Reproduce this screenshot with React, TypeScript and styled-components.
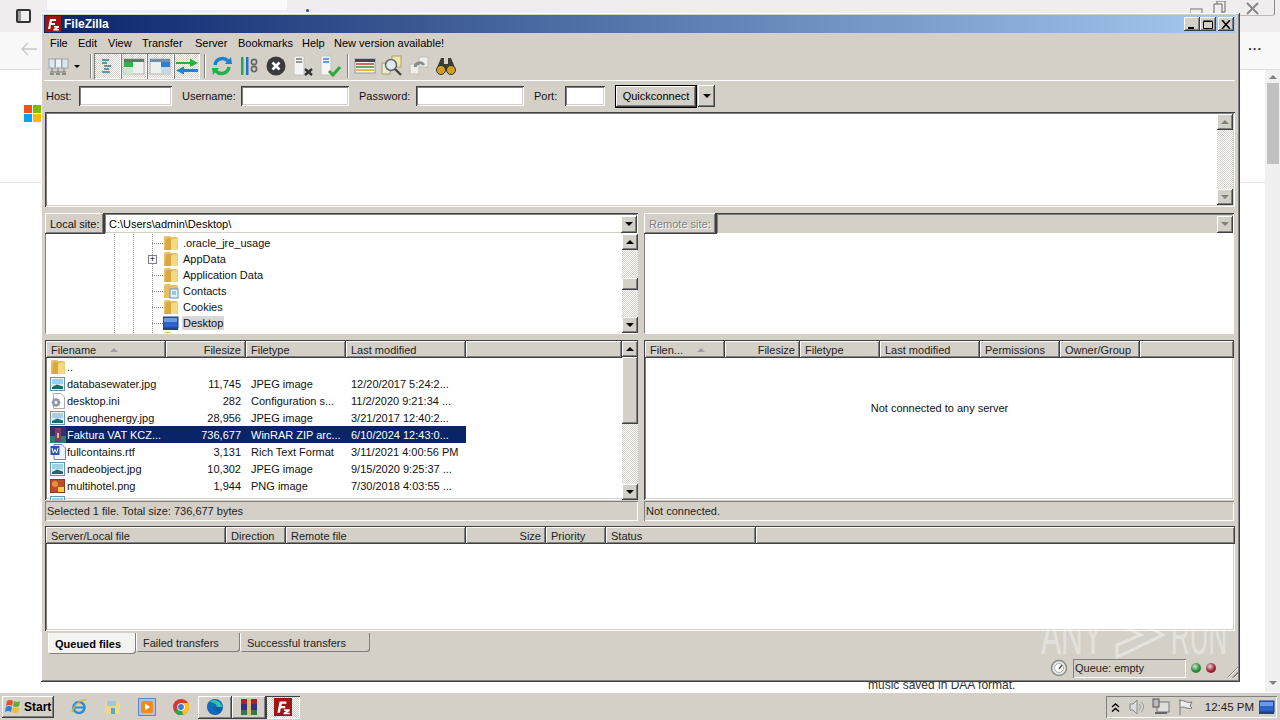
import * as React from "react";
import styled, { createGlobalStyle, css } from "styled-components";

const FACE = "#d4d0c8";
const UI_FONT = `"Liberation Sans", Arial, sans-serif`;

const raised = css`
  box-shadow: inset -1px -1px 0 #404040, inset 1px 1px 0 #fff, inset -2px -2px 0 #808080;
`;
const sunken = css`
  box-shadow: inset 1px 1px 0 #404040, inset -1px -1px 0 #fff, inset 2px 2px 0 #808080, inset -2px -2px 0 ${FACE};
`;
const dither = css`
  background-color: #fff;
  background-image: conic-gradient(${FACE} 25%, #fff 0 50%, ${FACE} 0 75%, #fff 0);
  background-size: 2px 2px;
`;

const Global = createGlobalStyle`
  html, body { margin: 0; padding: 0; background: #fff; overflow: hidden; }
  * { box-sizing: border-box; }
  body { font: 11px ${UI_FONT}; color: #000; }
`;

const Root = styled.div`
  position: relative;
  width: 1280px;
  height: 720px;
  display: flex;
  flex-direction: column;
  overflow: hidden;
`;

/* ---- browser behind the window ---- */
const Browser = styled.div`
  flex: 1;
  display: flex;
  flex-direction: column;
  min-height: 0;
`;
const TabStrip = styled.div`
  height: 32px;
  background: #efeded;
  display: flex;
  align-items: flex-start;
  padding-left: 16px;
`;
const SideIcon = styled.div`
  width: 15px;
  height: 14px;
  margin-top: 9px;
  border: 2px solid #333;
  border-radius: 2px;
  background: linear-gradient(90deg, #999 0 3px, transparent 3px);
`;
const TabWhite = styled.div`
  width: 240px;
  height: 10px;
  margin-left: 16px;
  background: #fafafa;
`;
const TabDot = styled.span`
  width: 3px;
  height: 3px;
  margin: 9px 0 0 19px;
  background: #1f4f8f;
  border-radius: 50%;
`;
const Captions = styled.div`
  margin-left: auto;
  width: 92px;
  height: 16px;
  margin-right: 5px;
  display: flex;
  align-items: center;
  justify-content: flex-end;
  padding-right: 14px;
  border-right: 1px solid #888;
  border-bottom: 1px solid #bbb;
  border-radius: 0 0 3px 0;
`;
const PageLine = styled.div`
  height: 1px;
  background: #e4e4e4;
  margin: 0 0 0 -24px;
`;
const AddressRow = styled.div`
  height: 38px;
  background: #f8f8f8;
  border-bottom: 1px solid #ddd;
  display: flex;
  align-items: center;
  justify-content: space-between;
  padding: 0 18px 4px 20px;
`;
const Dots = styled.span`
  color: #333;
  font-size: 13px;
  font-weight: bold;
  letter-spacing: 1px;
  margin-bottom: 6px;
`;
const PageBody = styled.div`
  flex: 1;
  display: flex;
  min-height: 0;
`;
const PageMain = styled.div`
  flex: 1;
  display: flex;
  flex-direction: column;
  padding: 35px 0 0 24px;
`;
const MsLogo = styled.div`
  width: 17px;
  height: 17px;
  display: grid;
  grid-template-columns: 8px 8px;
  gap: 1px;
  margin-bottom: 60px;
  span:nth-child(1) { background: #f25022; }
  span:nth-child(2) { background: #7fba00; }
  span:nth-child(3) { background: #00a4ef; }
  span:nth-child(4) { background: #ffb900; }
`;
const PageText = styled.div`
  font-size: 12px;
  line-height: 14px;
  color: #333;
  padding-left: 844px;
  margin-top: auto;
`;
const PageScroll = styled.div`
  width: 15px;
  background: #f0f0f0;
  display: flex;
  flex-direction: column;
  align-items: center;
  padding: 5px 0 7px;
`;
const PageThumb = styled.div`
  width: 12px;
  height: 81px;
  background: #c0c0c0;
  margin-top: 4px;
  margin-bottom: auto;
`;

/* ---- FileZilla window ---- */
const Win = styled.div`
  position: absolute;
  left: 41px;
  top: 13px;
  width: 1199px;
  height: 669px;
  background: ${FACE};
  padding: 2px 5px 2px 3px;
  display: flex;
  flex-direction: column;
  ${raised}
`;
const TitleBar = styled.div`
  height: 18px;
  flex: none;
  background: linear-gradient(90deg, #0a246a, #a6caf0);
  display: flex;
  align-items: center;
  color: #fff;
  font-weight: bold;
  font-size: 12px;
  padding-left: 1px;
  gap: 3px;
`;
const WinButtons = styled.div`
  margin-left: auto;
  display: flex;
  padding-right: 1px;
`;
const WinBtn = styled.div<{ $gap?: boolean }>`
  width: 16px;
  height: 14px;
  margin-left: ${(p) => (p.$gap ? "2px" : "0")};
  background: ${FACE};
  display: flex;
  align-items: center;
  justify-content: center;
  ${raised}
`;
const MenuBar = styled.div`
  height: 19px;
  flex: none;
  display: flex;
  align-items: center;
  padding-left: 6px;
`;
const MenuItem = styled.span<{ $w: number }>`
  width: ${(p) => p.$w}px;
`;
const ToolBar = styled.div`
  height: 29px;
  flex: none;
  display: flex;
  align-items: center;
  padding-left: 2px;
  border-bottom: 1px solid #fff;
`;
const ToolBtn = styled.div<{ $w?: number; $on?: boolean }>`
  width: ${(p) => p.$w ?? 27}px;
  height: 26px;
  display: flex;
  align-items: center;
  justify-content: center;
  flex: none;
  ${(p) =>
    p.$on &&
    css`
      ${dither}
      box-shadow: inset 1px 1px 0 #808080, inset -1px -1px 0 #fff;
    `}
`;
const ToolSep = styled.div`
  width: 2px;
  height: 24px;
  margin: 0 2px 0 4px;
  flex: none;
  border-left: 1px solid #808080;
  border-right: 1px solid #fff;
`;
const DropCaret = styled.span`
  width: 0;
  height: 0;
  border: 3px solid transparent;
  border-top: 3px solid #000;
  border-bottom: 0;
  margin: 0 6px 0 5px;
`;
const QuickRow = styled.div`
  height: 28px;
  flex: none;
  display: flex;
  align-items: center;
  padding: 2px 0 0 2px;
`;
const QLabel = styled.span<{ $w: number }>`
  width: ${(p) => p.$w}px;
  flex: none;
  color: #111;
`;
const QInput = styled.div<{ $w: number; $mr?: number }>`
  width: ${(p) => p.$w}px;
  height: 20px;
  margin-right: ${(p) => p.$mr ?? 10}px;
  background: #fff;
  flex: none;
  ${sunken}
`;
const QuickBtn = styled.div`
  width: 82px;
  height: 23px;
  background: ${FACE};
  border: 1px solid #000;
  display: flex;
  align-items: center;
  justify-content: center;
  ${raised}
`;
const QuickDrop = styled.div`
  width: 17px;
  height: 22px;
  margin-left: 1px;
  background: ${FACE};
  display: flex;
  align-items: center;
  justify-content: center;
  ${raised}
`;
const LogBox = styled.div`
  height: 95px;
  flex: none;
  margin: 3px 0 6px 1px;
  background: #fff;
  display: flex;
  justify-content: flex-end;
  padding: 2px 2px 2px 0;
  ${sunken}
`;

/* scrollbars */
const ScrollTrack = styled.div`
  width: 16px;
  flex: none;
  display: flex;
  flex-direction: column;
  justify-content: space-between;
  ${dither}
`;
const ScrollBtn = styled.div`
  width: 16px;
  height: 16px;
  background: ${FACE};
  display: flex;
  align-items: center;
  justify-content: center;
  flex: none;
  ${raised}
`;
const Thumb = styled.div<{ $h: number }>`
  width: 16px;
  height: ${(p) => p.$h}px;
  background: ${FACE};
  flex: none;
  ${raised}
`;
const Arrow = styled.span<{ $dir: "up" | "down"; $dim?: boolean }>`
  width: 0;
  height: 0;
  border: 4px solid transparent;
  ${(p) =>
    p.$dir === "up"
      ? css`
          border-top: 0;
          border-bottom: 4px solid ${p.$dim ? "#808080" : "#000"};
        `
      : css`
          border-bottom: 0;
          border-top: 4px solid ${p.$dim ? "#808080" : "#000"};
        `}
`;

/* panes */
const Panes = styled.div`
  display: grid;
  grid-template-columns: 593px 590px;
  column-gap: 6px;
  margin-left: 1px;
  flex: none;
`;
const Pane = styled.div`
  display: flex;
  flex-direction: column;
  min-width: 0;
`;
const SiteRow = styled.div`
  height: 21px;
  display: flex;
  box-shadow: inset 0 1px 0 #404040, inset 1px 0 0 #808080;
`;
const SiteLabel = styled.div<{ $w: number; $dim?: boolean }>`
  width: ${(p) => p.$w}px;
  flex: none;
  display: flex;
  align-items: center;
  padding-left: 5px;
  background: ${FACE};
  color: ${(p) => (p.$dim ? "#808080" : "#111")};
  text-shadow: ${(p) => (p.$dim ? "1px 1px 0 #fff" : "none")};
  ${raised}
`;
const SiteCombo = styled.div<{ $dim?: boolean }>`
  flex: 1;
  background: ${(p) => (p.$dim ? FACE : "#fff")};
  display: flex;
  align-items: center;
  justify-content: space-between;
  padding: 2px 1px 1px 5px;
  ${sunken}
`;
const ComboBtn = styled(ScrollBtn)`
  height: 17px;
`;
const TreeBox = styled.div`
  height: 100px;
  margin-bottom: 6px;
  background: #fff;
  display: flex;
  border-left: 1px solid #808080;
  border-bottom: 1px solid #fff;
  overflow: hidden;
`;
const TreeList = styled.div`
  flex: 1;
  padding: 1px 0 0 117px;
  background-image:
    repeating-linear-gradient(#999 0 1px, transparent 1px 2px),
    repeating-linear-gradient(#999 0 1px, transparent 1px 2px),
    repeating-linear-gradient(#999 0 1px, transparent 1px 2px);
  background-size: 1px 100%;
  background-position: 68px 0, 87px 0, 106px 0;
  background-repeat: no-repeat;
`;
const TreeRow = styled.div`
  height: 16px;
  display: flex;
  align-items: center;
  flex: none;
`;
const TreeSvg = styled.span`
  display: flex;
  width: 20px;
  flex: none;
`;
const TreeLabel = styled.span<{ $sel?: boolean }>`
  padding: 0 1px;
  margin-left: -1px;
  background: ${(p) => (p.$sel ? "#d8d8d8" : "transparent")};
  line-height: 14px;
  color: #111;
`;
const TreeStub = styled.span`
  width: 11px;
  margin-left: -11px;
  border-top: 1px dotted #888;
  flex: none;
`;
const Plus = styled.span`
  width: 9px;
  height: 9px;
  margin-left: -15px;
  margin-right: 6px;
  border: 1px solid #808080;
  background: #fff;
  display: flex;
  align-items: center;
  justify-content: center;
  font-size: 9px;
  line-height: 7px;
  flex: none;
`;
const ListBox = styled.div`
  height: 160px;
  display: flex;
  flex-direction: column;
  background: #fff;
  ${sunken}
  padding: 1px 0 0 1px;
  overflow: hidden;
`;
const HeadRow = styled.div`
  height: 17px;
  flex: none;
  display: flex;
  background: ${FACE};
`;
const HeadCell = styled.div<{ $w: number; $right?: boolean }>`
  width: ${(p) => p.$w}px;
  flex: none;
  display: flex;
  align-items: center;
  justify-content: ${(p) => (p.$right ? "flex-end" : "flex-start")};
  padding: 1px 5px 0 5px;
  color: #222;
  white-space: nowrap;
  overflow: hidden;
  ${raised}
`;
const HeadFill = styled.div`
  flex: 1;
  ${raised}
`;
const SortMark = styled.span`
  width: 0;
  height: 0;
  margin-left: 14px;
  border: 4px solid transparent;
  border-top: 0;
  border-bottom: 4px solid #a0a0a0;
`;
const ListInner = styled.div`
  flex: 1;
  min-height: 0;
  display: flex;
`;
const Rows = styled.div`
  flex: 1;
  min-width: 0;
  overflow: hidden;
`;
const Row = styled.div<{ $sel?: boolean }>`
  display: flex;
  height: 17px;
  width: 416px;
  margin-left: 4px;
  background: ${(p) => (p.$sel ? "#0a246a" : "transparent")};
  color: ${(p) => (p.$sel ? "#fff" : "#111")};
`;
const NameCell = styled.div`
  width: 116px;
  flex: none;
  display: flex;
  align-items: center;
  gap: 1px;
  white-space: nowrap;
  overflow: hidden;
`;
const Cell = styled.div<{ $w: number; $right?: boolean }>`
  width: ${(p) => p.$w}px;
  flex: none;
  display: flex;
  align-items: center;
  justify-content: ${(p) => (p.$right ? "flex-end" : "flex-start")};
  padding: 0 5px;
  white-space: nowrap;
  overflow: hidden;
`;
const ListThumbWrap = styled.div`
  flex: 1;
  display: flex;
  flex-direction: column;
`;
const Empty = styled.div`
  flex: 1;
  display: flex;
  justify-content: center;
  padding-top: 43px;
  line-height: 14px;
  color: #111;
`;
const StatusLine = styled.div`
  height: 20px;
  margin-top: 1px;
  display: flex;
  align-items: center;
  padding-left: 2px;
  color: #222;
  box-shadow: inset 1px 1px 0 #808080, inset -1px -1px 0 #fff;
`;
const QueueBox = styled.div`
  height: 105px;
  flex: none;
  margin: 5px 0 0 1px;
  background: #fff;
  padding: 1px 0 0 1px;
  ${sunken}
`;
const Tabs = styled.div`
  display: flex;
  flex: none;
  margin: 2px 0 0 4px;
  height: 21px;
  align-items: flex-start;
`;
const Tab = styled.div<{ $active?: boolean; $w: number }>`
  width: ${(p) => p.$w}px;
  height: ${(p) => (p.$active ? 21 : 19)}px;
  background: ${(p) => (p.$active ? "#f4f3f0" : FACE)};
  font-weight: ${(p) => (p.$active ? "bold" : "normal")};
  color: ${(p) => (p.$active ? "#000" : "#222")};
  display: flex;
  align-items: center;
  padding-left: 7px;
  border-radius: 0 0 3px 3px;
  box-shadow: inset -1px -1px 0 #808080, inset 1px 0 0 #fff;
`;
const Footer = styled.div`
  flex: 1;
  display: flex;
  align-items: center;
  justify-content: flex-end;
  padding-top: 2px;
`;
const QueueStatus = styled.div`
  width: 113px;
  height: 19px;
  margin-left: 5px;
  display: flex;
  align-items: center;
  padding-left: 2px;
  color: #222;
  box-shadow: inset 1px 1px 0 #808080, inset -1px -1px 0 #fff;
`;
const Led = styled.span<{ $c: string }>`
  width: 10px;
  height: 10px;
  border-radius: 50%;
  margin-left: 5px;
  background: radial-gradient(circle at 40% 35%, #ddd, ${(p) => p.$c} 55%);
`;
const Grip = styled.span`
  width: 13px;
  height: 13px;
  margin: 6px -3px 0 9px;
  background: repeating-linear-gradient(135deg, transparent 0 2px, #808080 2px 3px, #fff 3px 4px);
  clip-path: polygon(100% 0, 100% 100%, 0 100%);
`;
const Watermark = styled.div`
  position: absolute;
  left: 1041px;
  top: 609px;
  width: 192px;
  height: 50px;
  display: flex;
  align-items: flex-end;
  color: rgba(255, 255, 255, 0.4);
  pointer-events: none;
`;
const WatermarkWord = styled.span<{ $w: number; $scale: number }>`
  width: ${(p) => p.$w}px;
  flex: none;
  font-size: 52px;
  line-height: 46px;
  white-space: nowrap;
  transform: scaleX(${(p) => p.$scale});
  transform-origin: left bottom;
`;
const WatermarkPlay = styled.svg`
  flex: none;
  width: 52px;
  height: 50px;
  margin: 0 6px 0 8px;
`;

/* taskbar */
const TaskBar = styled.div`
  height: 28px;
  flex: none;
  background: ${FACE};
  border-top: 1px solid #fff;
  display: flex;
  align-items: center;
  padding: 1px 3px 0 2px;
`;
const StartBtn = styled.div`
  width: 52px;
  height: 22px;
  display: flex;
  align-items: center;
  padding-left: 3px;
  gap: 1px;
  font-weight: bold;
  font-size: 12px;
  ${raised}
`;
const TaskIcons = styled.div`
  display: flex;
  margin-left: 8px;
`;
const TaskIcon = styled.div<{ $state?: "up" | "down" }>`
  width: 34px;
  height: 23px;
  display: flex;
  align-items: center;
  justify-content: center;
  ${(p) => p.$state === "up" && raised}
  ${(p) =>
    p.$state === "down" &&
    css`
      ${dither}
      box-shadow: inset 1px 1px 0 #404040, inset -1px -1px 0 #fff;
    `}
`;
const Tray = styled.div`
  margin-left: auto;
  width: 171px;
  height: 22px;
  display: flex;
  align-items: center;
  padding: 0 2px 0 5px;
  box-shadow: inset 1px 1px 0 #808080, inset -1px -1px 0 #fff;
  color: #222;
`;
const TraySlot = styled.span<{ $ml: number }>`
  display: flex;
  margin-left: ${(p) => p.$ml}px;
`;
const Clock = styled.span`
  margin-left: auto;
  margin-right: 5px;
  font-size: 11.5px;
`;

/* ---- drawings ---- */
const Svg = styled.svg`
  flex: none;
  display: block;
`;
const S = ({ w = 16, h = 16, vb = "0 0 16 16", children }: { w?: number; h?: number; vb?: string; children: React.ReactNode }) => (
  <Svg width={w} height={h} viewBox={vb}>
    {children}
  </Svg>
);

const FzLogo = ({ size = 16 }: { size?: number }) => (
  <S w={size} h={size}>
    <rect width="16" height="16" fill="#a11410" />
    <path d="M3 13 L5 3 H11 V5 H7 L6.5 7 H10 V9 H6 L5.3 13Z" fill="#fff" />
    <path d="M9 10 H14 V11.5 L11.5 13 H14 V14.5 H8.5 V13 L11 11.5 H9Z" fill="#fff" />
  </S>
);
const BackArrow = () => (
  <S w={18} h={18} vb="0 0 18 18">
    <path d="M17 9 H2 M8 3 L2 9 L8 15" stroke="#c8c8c8" strokeWidth="1.4" fill="none" />
  </S>
);
const Folder = () => (
  <S>
    <path d="M1 3 Q1 1 3 1 H7 L8 2 H13 Q15 2 15 4 V15 H1Z" fill="#e8c060" />
    <path d="M2 15 L3 4 Q6 2 8 4 V15Z" fill="#d9a83e" />
    <path d="M8 5 Q11 3 14.5 4 V15 H8Z" fill="#f4d98a" />
  </S>
);
const ImageIco = () => (
  <S>
    <rect x="0.5" y="1.5" width="14" height="13" fill="#eef3f6" stroke="#6d93ab" />
    <rect x="2" y="3" width="11" height="5" fill="#9fd2e6" />
    <rect x="2" y="8" width="11" height="2" fill="#d8eef2" />
    <path d="M2 11 L7 8.5 L13 10.5 V13 H2Z" fill="#1d6a72" />
  </S>
);
const IniIco = () => (
  <S>
    <path d="M3.5 .5 H11 L14.5 4 V15.5 H3.5Z" fill="#fff" stroke="#a8aab0" />
    <circle cx="6" cy="9.5" r="3" fill="none" stroke="#8c93a8" strokeWidth="2" />
    <path d="M6 5 V14 M1.5 9.5 H10.5 M3 6.5 L9 12.5 M9 6.5 L3 12.5" stroke="#8c93a8" />
    <circle cx="6" cy="9.5" r="1.3" fill="#fff" />
  </S>
);
const RarIco = () => (
  <S>
    <rect width="16" height="16" fill="#3a2f6e" />
    <rect x="0" y="9" width="16" height="7" fill="#2c7d6a" />
    <rect x="5" y="1" width="6" height="14" fill="#7a3c6e" />
    <rect x="7" y="6" width="2" height="5" fill="#d8c070" />
  </S>
);
const RtfIco = () => (
  <S>
    <path d="M4 .5 H12 L15.5 4 V15.5 H4Z" fill="#eef3fb" stroke="#6b85b5" />
    <rect x="0.5" y="2" width="9" height="9" fill="#2a56b0" />
    <path d="M2 4 L3.4 9 L5 5.5 L6.6 9 L8 4" stroke="#fff" fill="none" />
  </S>
);
const PngIco = () => (
  <S>
    <rect x="0.5" y="1.5" width="14" height="13" fill="#b8502a" stroke="#8c3a1c" />
    <circle cx="5" cy="6" r="3" fill="#e89040" />
    <rect x="8" y="9" width="6" height="5" fill="#f2d24a" />
  </S>
);
const DesktopIco = () => (
  <S>
    <rect x="0" y="2" width="15" height="11" fill="#2d63c8" stroke="#1a3a80" />
    <rect x="1" y="3" width="13" height="4" fill="#6a9ae8" />
    <rect x="0" y="13" width="15" height="2" fill="#24407c" />
  </S>
);
const ContactsIco = () => (
  <S>
    <path d="M1 3 Q1 1 3 1 H7 L8 2 H13 Q15 2 15 4 V15 H1Z" fill="#e8c060" />
    <rect x="7" y="6" width="8" height="9" fill="#e8f2fa" stroke="#5b93c0" />
    <path d="M9 9 H13 M9 11 H13" stroke="#5b93c0" />
  </S>
);

const SiteManagerIco = () => (
  <S w={22} h={22} vb="0 0 22 22">
    <path d="M5 13 V17 M11 13 V17 M17 13 V17 M3 17 H19" stroke="#777" fill="none" />
    <rect x="2" y="4" width="6" height="9" fill="#dfe6ee" stroke="#9aa5b0" />
    <rect x="8.5" y="4" width="6" height="9" fill="#eef2f6" stroke="#9aa5b0" />
    <rect x="15" y="4" width="6" height="9" fill="#dfe6ee" stroke="#9aa5b0" />
    <path d="M3 19 h4 M9 19 h4 M15 19 h4" stroke="#8a8a80" strokeWidth="2" />
  </S>
);
const LogIco = () => (
  <S w={18} h={18} vb="0 0 18 18">
    <path d="M4 3 H11 M4 6 H9 M6 9 H13 M6 12 H11 M4 15 H12" stroke="#2f7f8c" strokeWidth="1.5" fill="none" />
  </S>
);
const TreeIco = ({ blue }: { blue?: boolean }) => (
  <S w={22} h={20} vb="0 0 22 20">
    <rect x="1" y="3" width="20" height="15" fill="#eef0ec" stroke="#b5b5ae" />
    <rect x="1" y="3" width="20" height="3" fill={blue ? "#6f8fb0" : "#5f7a66"} />
    {blue ? <rect x="12" y="6" width="9" height="5" fill="#2e7fd0" /> : <rect x="1" y="6" width="9" height="5" fill="#2fb34a" />}
    <rect x={blue ? 12 : 1} y="11" width="9" height="7" fill={blue ? "#c6d8ea" : "#cfe6d0"} />
  </S>
);
const TransferIco = () => (
  <S w={24} h={20} vb="0 0 24 20">
    <path d="M1 6 H15 V2.5 L23 7 L15 11 V8 H1Z" fill="#26b044" />
    <path d="M23 13 H9 V10.5 L1 14.5 L9 18.5 V16 H23Z" fill="#1f82d6" />
  </S>
);
const RefreshIco = () => (
  <S w={22} h={22} vb="0 0 22 22">
    <path d="M4 10 A7.5 7.5 0 0 1 17 6" stroke="#1d80d0" strokeWidth="3.5" fill="none" />
    <path d="M14 9 L21 9 L20 2Z" fill="#1d80d0" />
    <path d="M18 12 A7.5 7.5 0 0 1 5 16" stroke="#22b04a" strokeWidth="3.5" fill="none" />
    <path d="M8 13 L1 13 L2 20Z" fill="#22b04a" />
  </S>
);
const FilterIco = () => (
  <S w={22} h={22} vb="0 0 22 22">
    <rect x="3" y="2" width="2.5" height="18" fill="#22a850" />
    <rect x="8" y="2" width="2.5" height="18" fill="#1f74c8" />
    <circle cx="16" cy="7" r="2.6" fill="none" stroke="#666" strokeWidth="1.6" />
    <circle cx="16" cy="14" r="2.6" fill="none" stroke="#666" strokeWidth="1.6" />
  </S>
);
const CancelIco = () => (
  <S w={22} h={22} vb="0 0 22 22">
    <circle cx="11" cy="11" r="9.5" fill="#3a3a3a" />
    <path d="M7.5 7.5 L14.5 14.5 M14.5 7.5 L7.5 14.5" stroke="#fff" strokeWidth="2.6" />
  </S>
);
const ServerIco = ({ ok }: { ok?: boolean }) => (
  <S w={24} h={22} vb="0 0 24 22">
    <path d="M3 1 H13 V20 H3Z" fill="#f4f4f2" stroke="#c4c4bc" />
    <path d="M5 4 H11 M5 7 H11" stroke={ok ? "#3b7fc0" : "#777"} strokeWidth="1.5" />
    {ok ? (
      <path d="M11 16 L15 20 L22 12" stroke="#2aa83e" strokeWidth="3" fill="none" />
    ) : (
      <path d="M14 14 L21 20 M21 14 L14 20" stroke="#333" strokeWidth="2.4" />
    )}
  </S>
);
const QueueIco = () => (
  <S w={22} h={20} vb="0 0 22 20">
    <rect x="1" y="3" width="20" height="14" fill="#f8f8f0" stroke="#999" />
    <rect x="1" y="3" width="20" height="3" fill="#445" />
    <path d="M2 8 H20" stroke="#d03030" strokeWidth="1.5" />
    <path d="M2 11 H20" stroke="#2f8f3f" strokeWidth="1.5" />
    <path d="M2 14 H20" stroke="#e0a020" strokeWidth="1.5" />
  </S>
);
const SearchIco = () => (
  <S w={22} h={22} vb="0 0 22 22">
    <rect x="11" y="1" width="9" height="11" fill="#f2e6b0" stroke="#b0a060" />
    <rect x="1" y="8" width="8" height="11" fill="#e8edd0" stroke="#a0a070" />
    <circle cx="10" cy="10" r="5.5" fill="#dfe8f0" stroke="#666" strokeWidth="1.5" />
    <path d="M14 14 L20 20" stroke="#444" strokeWidth="2.4" />
  </S>
);
const CompareIco = () => (
  <S w={22} h={22} vb="0 0 22 22">
    <rect x="2" y="9" width="9" height="10" fill="#eeeeea" stroke="#c0c0b8" />
    <rect x="11" y="2" width="9" height="10" fill="#eeeeea" stroke="#c0c0b8" />
    <path d="M7 12 A5 5 0 0 1 16 10" stroke="#8a8a86" strokeWidth="3" fill="none" />
  </S>
);
const BinocularsIco = () => (
  <S w={22} h={22} vb="0 0 22 22">
    <path d="M6 3 H9 V9 H13 V3 H16 L21 15 H1Z" fill="#3c3c30" />
    <circle cx="6" cy="15" r="4.5" fill="#d0a020" stroke="#333" />
    <circle cx="16" cy="15" r="4.5" fill="#d0a020" stroke="#333" />
  </S>
);

const IE = () => (
  <S w={18} h={18} vb="0 0 18 18">
    <circle cx="9" cy="9.5" r="5.5" fill="none" stroke="#2a8fd8" strokeWidth="2.6" />
    <path d="M4 9.5 H14" stroke="#2a8fd8" strokeWidth="2" />
    <path d="M2 14 C5 5 12 1 16 2" stroke="#e0b030" strokeWidth="1.3" fill="none" />
  </S>
);
const Explorer = () => (
  <S w={18} h={18} vb="0 0 18 18">
    <rect x="1" y="5" width="15" height="11" fill="#efd88a" />
    <rect x="3" y="3" width="9" height="5" fill="#9cc8e0" />
    <rect x="7" y="10" width="4" height="6" fill="#5aa8c8" />
  </S>
);
const Media = () => (
  <S w={18} h={18} vb="0 0 18 18">
    <rect x=".5" y=".5" width="17" height="17" fill="#a8c4e8" stroke="#5b88c4" />
    <rect x="3" y="3" width="12" height="12" rx="2" fill="#f08a1c" />
    <path d="M7 5.5 L12 9 L7 12.5Z" fill="#fff" />
  </S>
);
const Chrome = () => (
  <S w={18} h={18} vb="0 0 18 18">
    <circle cx="9" cy="9" r="8" fill="#d8392c" />
    <path d="M9 9 L2 13 A8 8 0 0 0 11 16.8Z" fill="#2fa44f" />
    <path d="M9 9 L11 16.8 A8 8 0 0 0 16 5 L9 5Z" fill="#f8c51c" />
    <circle cx="9" cy="9" r="3.8" fill="#fff" />
    <circle cx="9" cy="9" r="2.9" fill="#3b78e0" />
  </S>
);
const Edge = () => (
  <S w={18} h={18} vb="0 0 18 18">
    <circle cx="9" cy="9" r="8" fill="#0f5fa8" />
    <path d="M1.5 8 C3 1 15 0 16.8 9 L8 9 C7 12 10 15 14 15 C8 19 1 15 1.5 8Z" fill="#0f6cbd" />
    <path d="M3 4 C7 0 14 2 16.8 9 L11 9 C11 6 7 4 3 4Z" fill="#35c1b0" />
  </S>
);
const WinRar = () => (
  <S w={18} h={18} vb="0 0 18 18">
    <rect x="1" y="1" width="16" height="5" fill="#a8202c" />
    <rect x="1" y="6" width="16" height="6" fill="#3a2f7e" />
    <rect x="1" y="12" width="16" height="5" fill="#2c7d4a" />
    <rect x="7" y="1" width="4" height="16" fill="#d8c070" />
  </S>
);
const Flag = () => (
  <S w={18} h={18} vb="0 0 18 18">
    <path d="M3 1 V17 M3 3 C7 1 9 6 15 4 L13 8 L15 10 C10 12 7 7 3 10" stroke="#777" fill="#eee" />
  </S>
);
const Speaker = () => (
  <S w={18} h={18} vb="0 0 18 18">
    <path d="M2 6 H5 L9 2 V16 L5 12 H2Z" fill="#ddd" stroke="#888" />
    <path d="M11 6 A4 4 0 0 1 11 12 M13 4 A6 6 0 0 1 13 14" stroke="#999" fill="none" />
  </S>
);
const Net = () => (
  <S w={18} h={18} vb="0 0 18 18">
    <rect x="5" y="4" width="12" height="10" fill="#ddd" stroke="#777" />
    <rect x="1" y="1" width="6" height="8" fill="#bbb" stroke="#555" />
    <path d="M3 15 H15" stroke="#666" strokeWidth="2" />
  </S>
);
const Chevrons = () => (
  <S w={9} h={11} vb="0 0 9 11">
    <path d="M1 5 L4.5 2 L8 5 M1 9.5 L4.5 6.5 L8 9.5" stroke="#000" strokeWidth="1.4" fill="none" />
  </S>
);
const WinFlag = () => (
  <S w={18} h={18} vb="0 0 18 18">
    <path d="M2 3 Q5 1 8 3 L7 8 Q4 6 1 8Z" fill="#e0502c" />
    <path d="M9 3 Q12 5 15 3 L14 8 Q11 10 8 8Z" fill="#5cb030" />
    <path d="M1 9 Q4 7 7 9 L6 14 Q3 12 0 14Z" fill="#2c80d8" />
    <path d="M8 9 Q11 11 14 9 L13 14 Q10 16 7 14Z" fill="#f0c020" />
  </S>
);
const Gauge = () => (
  <S w={18} h={18} vb="0 0 18 18">
    <circle cx="9" cy="9" r="7.5" fill="#e8e8e4" stroke="#8a8a86" strokeWidth="1.5" />
    <circle cx="9" cy="9" r="4.5" fill="#fff" stroke="#aaa" />
    <path d="M9 10 L12 6" stroke="#555" strokeWidth="1.5" />
  </S>
);
const CaptionGlyphs = () => (
  <S w={70} h={14} vb="0 0 70 14">
    <rect x="0" y="8" width="12" height="6" fill="none" stroke="#777" />
    <path d="M24 14 V3 H32 V14 M27 3 V0 H35 V11 H32" fill="none" stroke="#666" />
    <path d="M57 2 L68 13 M68 2 L57 13" stroke="#888" strokeWidth="2" />
  </S>
);

/* ---- data ---- */
type Col = { w: number; label: string; right?: boolean };
const localCols: Col[] = [
  { w: 120, label: "Filename" },
  { w: 80, label: "Filesize", right: true },
  { w: 100, label: "Filetype" },
  { w: 120, label: "Last modified" },
];
const remoteCols: Col[] = [
  { w: 80, label: "Filen..." },
  { w: 75, label: "Filesize", right: true },
  { w: 80, label: "Filetype" },
  { w: 100, label: "Last modified" },
  { w: 80, label: "Permissions" },
  { w: 80, label: "Owner/Group" },
];
const queueCols: Col[] = [
  { w: 180, label: "Server/Local file" },
  { w: 60, label: "Direction" },
  { w: 180, label: "Remote file" },
  { w: 80, label: "Size", right: true },
  { w: 60, label: "Priority" },
  { w: 150, label: "Status" },
];
const files = [
  { icon: <Folder />, name: "..", size: "", type: "", date: "" },
  { icon: <ImageIco />, name: "databasewater.jpg", size: "11,745", type: "JPEG image", date: "12/20/2017 5:24:2..." },
  { icon: <IniIco />, name: "desktop.ini", size: "282", type: "Configuration s...", date: "11/2/2020 9:21:34 ..." },
  { icon: <ImageIco />, name: "enoughenergy.jpg", size: "28,956", type: "JPEG image", date: "3/21/2017 12:40:2..." },
  { icon: <RarIco />, name: "Faktura VAT KCZ...", size: "736,677", type: "WinRAR ZIP arc...", date: "6/10/2024 12:43:0...", sel: true },
  { icon: <RtfIco />, name: "fullcontains.rtf", size: "3,131", type: "Rich Text Format", date: "3/11/2021 4:00:56 PM" },
  { icon: <ImageIco />, name: "madeobject.jpg", size: "10,302", type: "JPEG image", date: "9/15/2020 9:25:37 ..." },
  { icon: <PngIco />, name: "multihotel.png", size: "1,944", type: "PNG image", date: "7/30/2018 4:03:55 ..." },
  { icon: <ImageIco />, name: "", size: "", type: "", date: "" },
];
const tree = [
  { icon: <Folder />, label: ".oracle_jre_usage" },
  { icon: <Folder />, label: "AppData", plus: true },
  { icon: <Folder />, label: "Application Data" },
  { icon: <ContactsIco />, label: "Contacts" },
  { icon: <Folder />, label: "Cookies" },
  { icon: <DesktopIco />, label: "Desktop", sel: true },
  { icon: <Folder />, label: "" },
];
const menus: [string, number][] = [
  ["File", 28], ["Edit", 30], ["View", 34], ["Transfer", 53], ["Server", 43],
  ["Bookmarks", 64], ["Help", 32], ["New version available!", 130],
];

const Header = ({ cols, sort }: { cols: Col[]; sort?: boolean }) => (
  <HeadRow>
    {cols.map((c, i) => (
      <HeadCell key={c.label} $w={c.w} $right={c.right}>
        {c.label}
        {sort && i === 0 && <SortMark />}
      </HeadCell>
    ))}
    <HeadFill />
  </HeadRow>
);

export default function App() {
  return (
    <Root>
      <Global />
      <Browser>
        <TabStrip>
          <SideIcon />
          <TabWhite />
          <TabDot />
          <Captions>
            <CaptionGlyphs />
          </Captions>
        </TabStrip>
        <AddressRow>
          <BackArrow />
          <Dots>...</Dots>
        </AddressRow>
        <PageBody>
          <PageMain>
            <MsLogo>
              <span />
              <span />
              <span />
              <span />
            </MsLogo>
            <PageLine />
            <PageText>music saved in DAA format.</PageText>
          </PageMain>
          <PageScroll>
            <Arrow $dir="up" $dim />
            <PageThumb />
            <Arrow $dir="down" $dim />
          </PageScroll>
        </PageBody>
      </Browser>

      <TaskBar>
        <StartBtn>
          <WinFlag />
          Start
        </StartBtn>
        <TaskIcons>
          <TaskIcon><IE /></TaskIcon>
          <TaskIcon><Explorer /></TaskIcon>
          <TaskIcon><Media /></TaskIcon>
          <TaskIcon><Chrome /></TaskIcon>
          <TaskIcon $state="up"><Edge /></TaskIcon>
          <TaskIcon $state="up"><WinRar /></TaskIcon>
          <TaskIcon $state="down"><FzLogo size={18} /></TaskIcon>
        </TaskIcons>
        <Tray>
          <Chevrons />
          <TraySlot $ml={8}><Speaker /></TraySlot>
          <TraySlot $ml={6}><Net /></TraySlot>
          <TraySlot $ml={7}><Flag /></TraySlot>
          <Clock>12:45 PM</Clock>
          <DesktopIco />
        </Tray>
      </TaskBar>

      <Win>
        <TitleBar>
          <FzLogo />
          FileZilla
          <WinButtons>
            <WinBtn>
              <S w={10} h={9} vb="0 0 10 9"><rect x="1" y="7" width="6" height="2" /></S>
            </WinBtn>
            <WinBtn>
              <S w={10} h={9} vb="0 0 10 9"><path d="M.5 1.5 H9.5 V8.5 H.5Z M.5 1 H9.5" stroke="#000" fill="none" /></S>
            </WinBtn>
            <WinBtn $gap>
              <S w={10} h={9} vb="0 0 10 9"><path d="M1 0 L9 9 M9 0 L1 9" stroke="#000" strokeWidth="1.6" /></S>
            </WinBtn>
          </WinButtons>
        </TitleBar>
        <MenuBar>
          {menus.map(([m, w]) => (
            <MenuItem key={m} $w={w}>{m}</MenuItem>
          ))}
        </MenuBar>
        <ToolBar>
          <ToolBtn $w={23}><SiteManagerIco /></ToolBtn>
          <DropCaret />
          <ToolSep />
          <ToolBtn $w={26.5} $on><LogIco /></ToolBtn>
          <ToolBtn $w={26.5} $on><TreeIco /></ToolBtn>
          <ToolBtn $w={26.5} $on><TreeIco blue /></ToolBtn>
          <ToolBtn $w={26.5} $on><TransferIco /></ToolBtn>
          <ToolSep />
          <ToolBtn><RefreshIco /></ToolBtn>
          <ToolBtn><FilterIco /></ToolBtn>
          <ToolBtn><CancelIco /></ToolBtn>
          <ToolBtn><ServerIco /></ToolBtn>
          <ToolBtn><ServerIco ok /></ToolBtn>
          <ToolSep />
          <ToolBtn><QueueIco /></ToolBtn>
          <ToolBtn><SearchIco /></ToolBtn>
          <ToolBtn><CompareIco /></ToolBtn>
          <ToolBtn><BinocularsIco /></ToolBtn>
        </ToolBar>
        <QuickRow>
          <QLabel $w={33}>Host:</QLabel>
          <QInput $w={93} />
          <QLabel $w={59}>Username:</QLabel>
          <QInput $w={108} />
          <QLabel $w={57}>Password:</QLabel>
          <QInput $w={108} />
          <QLabel $w={31}>Port:</QLabel>
          <QInput $w={40} />
          <QuickBtn>Quickconnect</QuickBtn>
          <QuickDrop><Arrow $dir="down" /></QuickDrop>
        </QuickRow>
        <LogBox>
          <ScrollTrack>
            <ScrollBtn><Arrow $dir="up" $dim /></ScrollBtn>
            <ScrollBtn><Arrow $dir="down" $dim /></ScrollBtn>
          </ScrollTrack>
        </LogBox>

        <Panes>
          <Pane>
            <SiteRow>
              <SiteLabel $w={59}>Local site:</SiteLabel>
              <SiteCombo>
                C:\Users\admin\Desktop\
                <ComboBtn><Arrow $dir="down" /></ComboBtn>
              </SiteCombo>
            </SiteRow>
            <TreeBox>
              <TreeList>
                {tree.map((t, i) => (
                  <TreeRow key={i}>
                    {t.plus ? <Plus>+</Plus> : <TreeStub />}
                    <TreeSvg>{t.icon}</TreeSvg>
                    <TreeLabel $sel={t.sel}>{t.label}</TreeLabel>
                  </TreeRow>
                ))}
              </TreeList>
              <ScrollTrack>
                <ScrollBtn><Arrow $dir="up" /></ScrollBtn>
                <Thumb $h={12} />
                <ScrollBtn><Arrow $dir="down" /></ScrollBtn>
              </ScrollTrack>
            </TreeBox>
            <ListBox>
              <ListInner>
                <Rows>
                  <Header cols={localCols} sort />
                  {files.map((f, i) => (
                    <Row key={i} $sel={f.sel}>
                      <NameCell>{f.icon}{f.name}</NameCell>
                      <Cell $w={80} $right>{f.size}</Cell>
                      <Cell $w={100}>{f.type}</Cell>
                      <Cell $w={120}>{f.date}</Cell>
                    </Row>
                  ))}
                </Rows>
                <ScrollTrack>
                  <ScrollBtn><Arrow $dir="up" /></ScrollBtn>
                  <ListThumbWrap><Thumb $h={67} /></ListThumbWrap>
                  <ScrollBtn><Arrow $dir="down" /></ScrollBtn>
                </ScrollTrack>
              </ListInner>
            </ListBox>
            <StatusLine>Selected 1 file. Total size: 736,677 bytes</StatusLine>
          </Pane>
          <Pane>
            <SiteRow>
              <SiteLabel $w={72} $dim>Remote site:</SiteLabel>
              <SiteCombo $dim>
                <span />
                <ComboBtn><Arrow $dir="down" $dim /></ComboBtn>
              </SiteCombo>
            </SiteRow>
            <TreeBox />
            <ListBox>
              <Header cols={remoteCols} sort />
              <Empty>Not connected to any server</Empty>
            </ListBox>
            <StatusLine>Not connected.</StatusLine>
          </Pane>
        </Panes>

        <QueueBox>
          <Header cols={queueCols} />
        </QueueBox>
        <Tabs>
          <Tab $active $w={88}>Queued files</Tab>
          <Tab $w={104}>Failed transfers</Tab>
          <Tab $w={130}>Successful transfers</Tab>
        </Tabs>
        <Footer>
          <Gauge />
          <QueueStatus>Queue: empty</QueueStatus>
          <Led $c="#1c8c2c" />
          <Led $c="#a01c2c" />
          <Grip />
        </Footer>
      </Win>
      <Watermark>
        <WatermarkWord $w={64} $scale={0.58}>ANY</WatermarkWord>
        <WatermarkPlay viewBox="0 0 52 50">
          <path d="M4 2 L50 26 L4 48 V36 L28 26 L4 14Z" fill="none" stroke="currentColor" strokeWidth="3" />
        </WatermarkPlay>
        <WatermarkWord $w={60} $scale={0.5}>RUN</WatermarkWord>
      </Watermark>
    </Root>
  );
}
